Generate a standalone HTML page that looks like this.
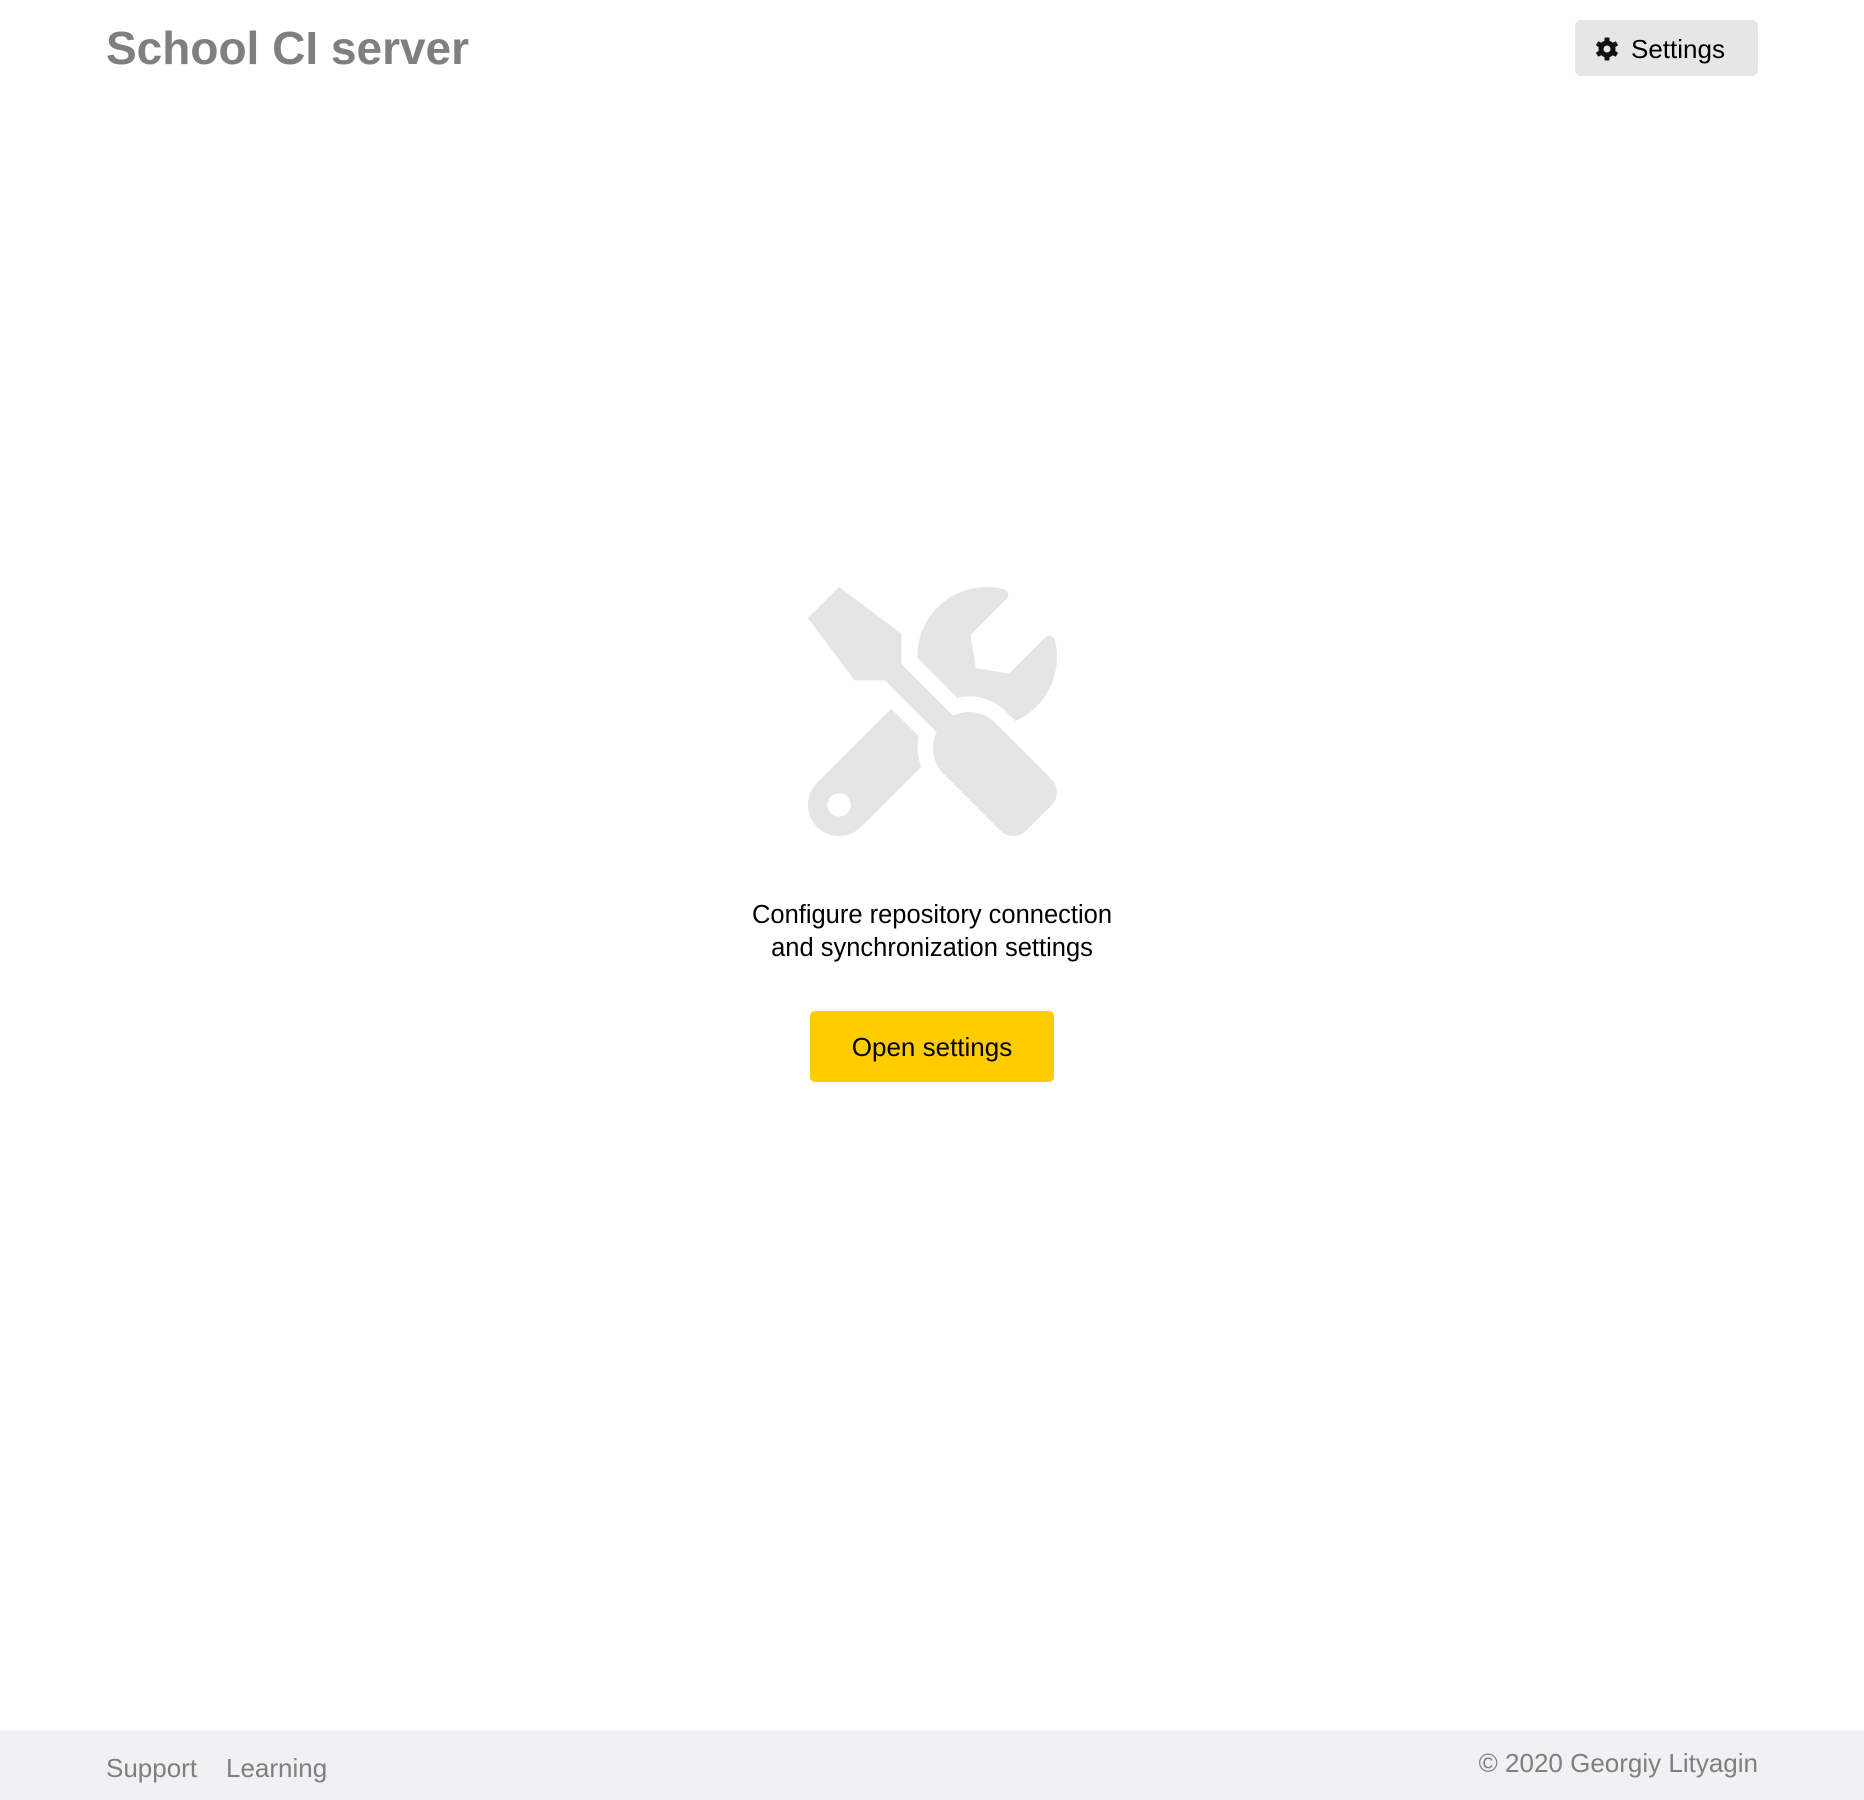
<!DOCTYPE html>
<html><head><meta charset="utf-8"><style>
html,body{margin:0;padding:0;width:1864px;height:1800px;background:#fff;font-family:"Liberation Sans",sans-serif;position:relative;overflow:hidden}
.title{position:absolute;left:106px;top:21px;font-size:46px;font-weight:bold;color:#7f7f7f;white-space:nowrap;letter-spacing:0px}
.btn{position:absolute;left:1575px;top:20px;width:183px;height:56px;background:#e6e6e6;border-radius:6px;font-size:26px;color:#000}
.btn svg{position:absolute;left:20px;top:17px}
.btn span{position:absolute;left:56px;top:14px}
.icon{position:absolute;left:808px;top:587px}
.msg{position:absolute;left:0;width:1864px;top:899px;text-align:center;font-size:25.5px;line-height:33px;color:#000}
.open{position:absolute;left:810px;top:1011px;width:244px;height:71px;background:#ffcc00;border-radius:5px;font-size:26px;line-height:73px;text-align:center;color:#000}
.footer{position:absolute;left:0;top:1730px;width:1864px;height:70px;background:#f0f1f3;color:#7f7f7f;font-size:26px}
.footer .l{position:absolute;left:106px;top:23px}
.footer .l2{position:absolute;left:226px;top:23px}
.footer .r{position:absolute;right:106px;top:18px}
</style></head><body>
<div class="title">School CI server</div>
<div class="btn"><svg width="24" height="24" viewBox="0 0 24 24"><g fill="#111"><rect x="9.5" y="0.5" width="5" height="23" rx="1"/><rect x="9.5" y="0.5" width="5" height="23" rx="1" transform="rotate(60 12 12)"/><rect x="9.5" y="0.5" width="5" height="23" rx="1" transform="rotate(120 12 12)"/><circle cx="12" cy="12" r="8.5"/></g><circle cx="12" cy="12" r="3.5" fill="#e6e6e6"/></svg><span>Settings</span></div>
<svg class="icon" width="249" height="249" viewBox="0 0 512 512"><path fill="#e5e5e5" d="M501.1 395.7L384 278.6c-23.1-23.1-57.6-27.6-85.4-13.9L192 158.1V96L64 0 0 64l96 128h62.1l106.6 106.6c-13.6 27.8-9.2 62.3 13.9 85.4l117.1 117.1c14.6 14.6 38.2 14.6 52.7 0l52.7-52.7c14.5-14.6 14.5-38.2 0-52.7zM331.7 225c28.3 0 54.9 11 74.9 31l19.4 19.4c15.8-6.9 30.8-16.5 43.8-29.5 37.1-37.1 49.7-89.3 37.9-136.7-2.2-9-13.5-12.1-20.1-5.5l-74.4 74.4-67.9-11.3L334 98.9l74.4-74.4c6.6-6.6 3.4-17.9-5.7-20.200-47.4-11.7-99.6.9-136.6 37.9-28.5 28.5-41.9 66.1-41.2 103.6l82.1 82.1c8.1-1.9 16.5-2.9 24.7-2.9zm-103.9 82l-56.7-56.7L18.7 402.8c-25 25-25 65.5 0 90.5s65.5 25 90.5 0l123.6-123.6c-7.600-19.9-9.9-41.6-5-62.7zM64 472c-13.2 0-24-10.8-24-24 0-13.3 10.7-24 24-24s24 10.7 24 24c0 13.200-10.7 24-24 24z"/></svg>
<div class="msg">Configure repository connection<br>and synchronization settings</div>
<div class="open">Open settings</div>
<div class="footer"><span class="l">Support</span><span class="l2">Learning</span><span class="r">© 2020 Georgiy Lityagin</span></div>
</body></html>
